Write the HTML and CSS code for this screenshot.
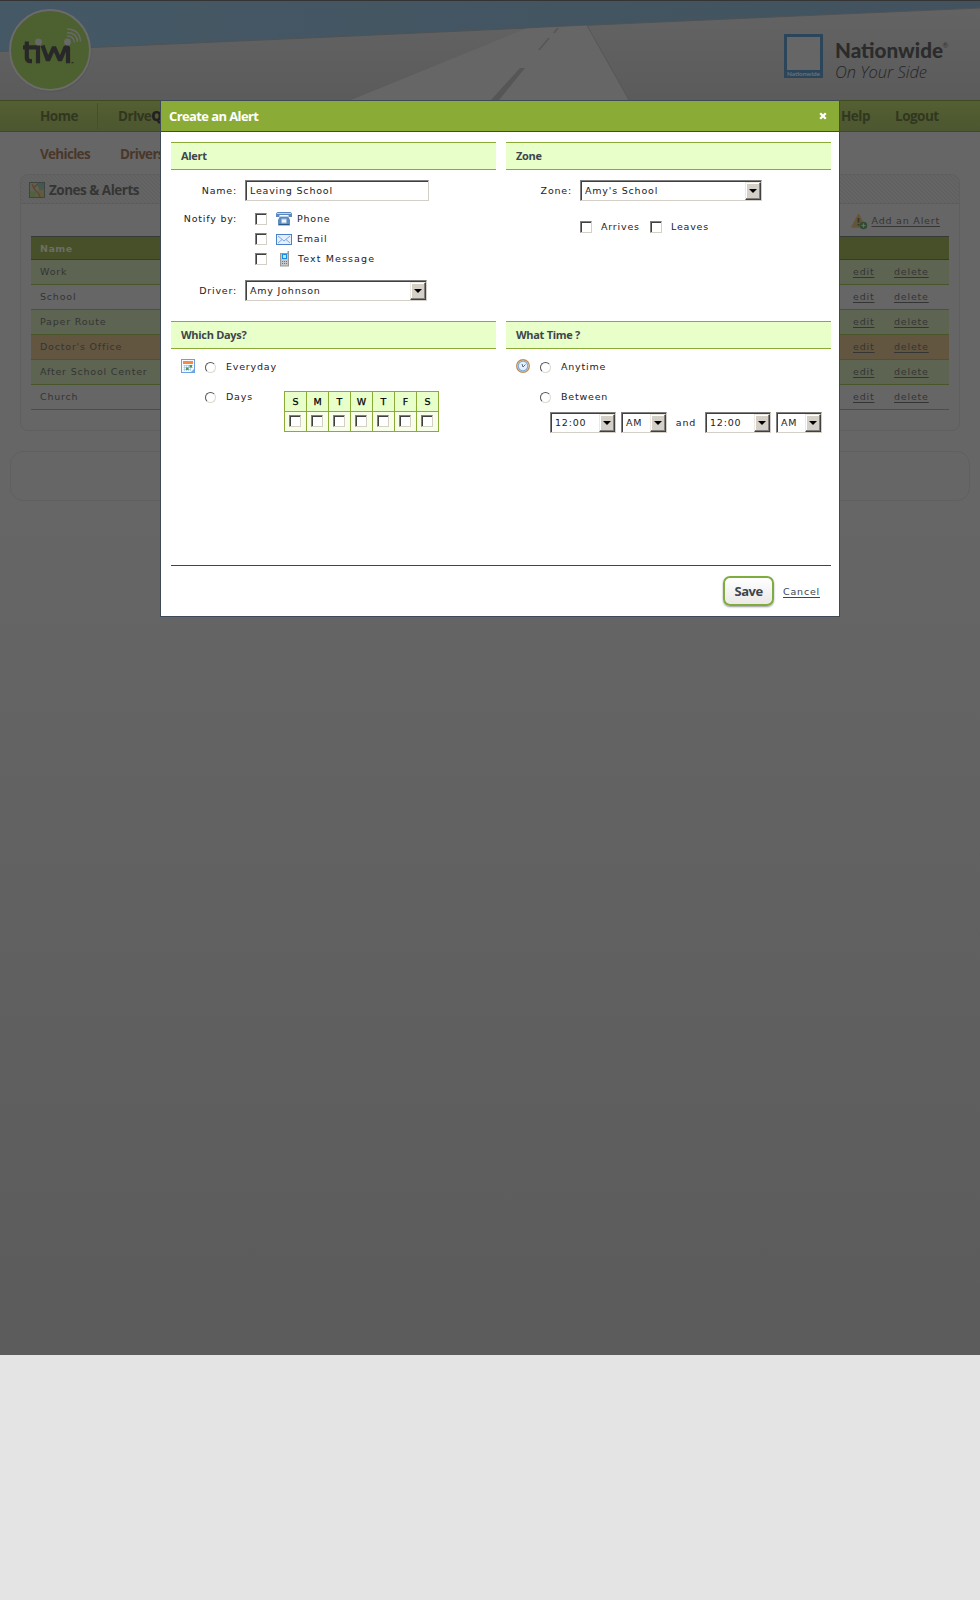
FILE: index.html
```
<!DOCTYPE html>
<html lang="en">
<head>
<meta charset="utf-8">
<title>Create an Alert</title>
<link rel="stylesheet" href="styles.css">
</head>
<body>
<div class="page">
  <header class="banner">
    <svg width="980" height="100" viewBox="0 0 980 100">
      <defs>
        <linearGradient id="sky" x1="0" y1="0" x2="1" y2="0"><stop offset="0" stop-color="#455865"/><stop offset="1" stop-color="#42535f"/></linearGradient>
        <linearGradient id="land" x1="0" y1="0" x2="0" y2="1"><stop offset="0" stop-color="#646464"/><stop offset="1" stop-color="#5b5b5b"/></linearGradient>
      </defs>
      <rect width="980" height="100" fill="url(#land)"/>
      <path d="M0 0H980V8L660 22L330 37L0 51.500Z" fill="url(#sky)"/>
      <path d="M0 51.500L330 37L660 22L980 8" fill="none" stroke="#505355"/>
      <path d="M351 100L526 28.500L587 25.500L629 100Z" fill="#666"/>
      <path d="M587 25.500L629 100" stroke="#575757" fill="none"/>
      <path d="M491 100L520 68H525L499 100ZM538 50L548 38H550L540 50ZM553 33L557 28H559L555 33Z" fill="#565656"/>
      <rect width="980" height="1" fill="#343434"/>
      <circle cx="50.500" cy="51" r="41" fill="#505050" opacity=".6"/>
      <circle cx="50" cy="50" r="40" fill="#4d602f" stroke="#6b6b6b" stroke-width="2"/>
      <g fill="none" stroke="#282828" stroke-width="4.200">
        <path d="M26.800 41.500V57.500Q26.800 61.200 30.500 61.200H32M23 47.300H40"/>
        <path d="M38 46V63.300"/>
        <path d="M42.500 45.500L48 60.500L54 47L60 60.500L65.500 47.300H68V63.300" stroke-linejoin="bevel"/>
      </g>
      <circle cx="38.500" cy="42" r="3.400" fill="#686868"/><circle cx="67.500" cy="42" r="3.400" fill="#686868"/>
      <path d="M67 36Q74 36 74.500 42.500M67 32.500Q77.500 33 77.500 42M67 29Q80 29.500 80.500 41.500" fill="none" stroke="#686868" stroke-width="1.400"/>
      <rect x="71.500" y="62" width="2" height="1.200" fill="#282828"/>
      <rect x="784" y="34" width="39" height="44" fill="#2b465a"/>
      <rect x="787" y="37" width="33" height="33" fill="#666"/>
      <text x="787" y="76" class="mark-small" textLength="33" lengthAdjust="spacingAndGlyphs">Nationwide</text>
      <text x="835" y="58" class="mark-name" textLength="108" lengthAdjust="spacingAndGlyphs">Nationwide</text>
      <text x="942.500" y="48" class="mark-reg">®</text>
      <text x="835" y="78" class="mark-line" textLength="92" lengthAdjust="spacingAndGlyphs">On Your Side</text>
    </svg>
  </header>
  <nav class="nav"><span class="home">Home</span><span class="driveq">DrIve<b>Q</b></span><span class="help">Help</span><span class="logout">Logout</span></nav>
  <nav class="subnav"><span>Vehicles</span><span>Drivers</span></nav>
  <section class="panel">
    <div class="panel-head">
      <svg width="16" height="16" viewBox="0 0 16 16"><rect width="16" height="16" fill="#3d4541"/><rect x="1" y="1" width="14" height="14" fill="#5c6150"/><path d="M8 1h7v7l-4 2z" fill="#44584f"/><path d="M1 9l6 1v5H1z" fill="#51603e"/><path d="M8 15V9l7-2v8z" fill="#5f5c3e"/><path d="M3 2l3 6 4 4 1 3M4 6l5-4" fill="none" stroke="#653f33" stroke-width="1.200"/></svg>
      <h2>Zones &amp; Alerts</h2>
    </div>
    <div class="add">
      <svg width="17" height="17" viewBox="0 0 17 17"><path d="M7.500 1.500L14 14H1Z" fill="#5d573e" stroke="#675636" stroke-width="1.600" stroke-linejoin="round"/><path d="M7.500 5v4.500M7.500 11v1.500" stroke="#3c3424" stroke-width="1.800"/><circle cx="12.500" cy="12.500" r="3.800" fill="#314c31"/><path d="M10.500 12.500h4M12.500 10.500v4" stroke="#667066" stroke-width="1.200"/></svg>
      <a>Add an Alert</a>
    </div>
    <div class="list">
      <div class="list-head">Name</div>
      <div class="item odd"><span>Work</span><a>edit</a><a>delete</a></div>
      <div class="item"><span>School</span><a>edit</a><a>delete</a></div>
      <div class="item odd"><span>Paper Route</span><a>edit</a><a>delete</a></div>
      <div class="item hot"><span>Doctor's Office</span><a>edit</a><a>delete</a></div>
      <div class="item odd"><span>After School Center</span><a>edit</a><a>delete</a></div>
      <div class="item"><span>Church</span><a>edit</a><a>delete</a></div>
    </div>
  </section>
  <div class="foot"></div>
</div>

<div class="modal">
  <div class="title"><h1>Create an Alert</h1><svg width="8" height="8" viewBox="0 0 8 8"><path d="M1.200 1.200L6.800 6.800M6.800 1.200L1.200 6.800" stroke="#fff" stroke-width="2.300"/></svg></div>
  <div class="body">
    <section class="alert">
      <h3>Alert</h3>
      <div class="form">
        <label>Name:</label><div class="field name">Leaving School</div>
        <label class="notify">Notify by:</label>
        <div class="ways">
          <div class="way"><i class="check"></i><svg width="16" height="14" viewBox="0 0 16 14"><path d="M0 1.500L1.500 0H14.500L16 1.500V5H12.500V3H3.500V5H0Z" fill="#5c88bd"/><path d="M1 1.500H15" stroke="#bfd5ee"/><path d="M3.500 5H12.500L14 8V13.500H2V8Z" fill="#5f8cc0"/><path d="M3 12.500H13" stroke="#29568c"/><path d="M5.500 7H10.500V11H5.500Z" fill="#f2f7ff" stroke="#9ab8da"/><path d="M3.500 4.500H12.500" stroke="#b7cfe9"/></svg><span>Phone</span></div>
          <div class="way"><i class="check"></i><svg width="16" height="11" viewBox="0 0 16 11"><rect x=".5" y=".5" width="15" height="10" fill="#e6f0fc" stroke="#4b80c8"/><path d="M2 2L8 7L14 2M2 9L6 5.500M14 9L10 5.500" fill="none" stroke="#7ca9e0"/></svg><span>Email</span></div>
          <div class="way"><i class="check"></i><svg width="16" height="16" viewBox="0 0 16 16"><path d="M11.500 0H13V15.500H4V2H11.500Z" fill="#999"/><rect x="5" y="3" width="7" height="11.500" fill="#c6c6c6"/><rect x="6.500" y="3.500" width="4" height="4" fill="#b9e6ff" stroke="#148ee5"/><path d="M6 10.500h1M8 10.500h1M10 10.500h1M6 12.500h1M8 12.500h1M10 12.500h1" stroke="#747474"/><path d="M6 10.500h1" stroke="#3ca34b"/><path d="M10 10.500h1" stroke="#d24a3c"/></svg><span class="sms">Text Message</span></div>
        </div>
        <label>Driver:</label><div class="field select">Amy Johnson<i class="drop"></i></div>
      </div>
    </section>
    <section>
      <h3>Zone</h3>
      <div class="form">
        <label>Zone:</label><div class="field select">Amy's School<i class="drop"></i></div>
        <div class="zones"><i class="check"></i><span class="arrives">Arrives</span><i class="check"></i><span>Leaves</span></div>
      </div>
    </section>
    <section>
      <h3>Which Days?</h3>
      <div class="opts">
        <svg width="14" height="14" viewBox="0 0 14 14"><rect x=".5" y=".5" width="13" height="13" fill="#f7fbff" stroke="#6aa0df"/><rect x="2" y="2" width="10" height="3" fill="#f38a45"/><path d="M2.500 6.500H12M2.500 8.500H12M2.500 10.500H10M3.500 6V12M5.500 6V12M7.500 6V12M9.500 6V12" stroke="#a9c6e6" stroke-width=".8"/><path d="M8.500 6h2.500v2.500H8.500zM5 8.500h2.500v2.500h-2.500z" fill="#4b9c45"/><path d="M10 13L13 10V13Z" fill="#78a9df"/></svg>
        <i class="radio"></i><span>Everyday</span>
      </div>
      <div class="opts second"><i class="radio"></i><span>Days</span>
        <div class="week"><b>S</b><b>M</b><b>T</b><b>W</b><b>T</b><b>F</b><b>S</b><u><i class="check"></i></u><u><i class="check"></i></u><u><i class="check"></i></u><u><i class="check"></i></u><u><i class="check"></i></u><u><i class="check"></i></u><u><i class="check"></i></u></div>
      </div>
    </section>
    <section>
      <h3 class="wide">What Time ?</h3>
      <div class="opts">
        <svg width="14" height="14" viewBox="0 0 14 14"><circle cx="7" cy="7" r="6.300" fill="#fff" stroke="#bd8f55" stroke-width="1.400"/><circle cx="7" cy="7" r="4.800" fill="#e2effc" stroke="#7ca7dc" stroke-width="1.200"/><path d="M6 5L7 8L9.500 5.500" stroke="#5e6c80" fill="none"/></svg>
        <i class="radio"></i><span>Anytime</span>
      </div>
      <div class="opts second"><i class="radio"></i><span>Between</span></div>
      <div class="times">
        <div class="field time">12:00<i class="drop"></i></div><div class="field half">AM<i class="drop"></i></div><span>and</span><div class="field time">12:00<i class="drop"></i></div><div class="field half">AM<i class="drop"></i></div>
      </div>
    </section>
  </div>
  <div class="actions"><button>Save</button><a>Cancel</a></div>
</div>
</body>
</html>
```
FILE: styles.css
```
* { box-sizing: border-box; }
body { margin: 0; background: #e4e4e4; height: 1600px; font: 9.500px/12px "DejaVu Sans", sans-serif; letter-spacing: .8px; color: #222; position: relative; overflow: hidden; }
svg { display: block; flex: none; }
i { font-style: normal; flex: none; }
h1, h2, h3 { margin: 0; font-family: "Open Sans", sans-serif; font-weight: 700; }
a { text-decoration: underline; text-underline-offset: 2px; }
.page { height: 1355px; background: linear-gradient(#666 0, #666 500px, #5c5c5c 1300px); }
.banner { height: 100px; }
.mark-small { font: 700 6px Lato, sans-serif; letter-spacing: 0; fill: #66737d; }
.mark-name { font: 900 20px Lato, sans-serif; letter-spacing: 0; fill: #2b2b2b; }
.mark-reg { font: 7px Lato, sans-serif; letter-spacing: 0; fill: #333; }
.mark-line { font: italic 300 16.500px "Open Sans", sans-serif; letter-spacing: 0; fill: #252525; }
.nav { height: 32px; border-top: 1px solid #3e4b22; border-bottom: 1px solid #3e4925; background: linear-gradient(#545f32, #4c5630); display: flex; align-items: center; font: 700 13.500px/20px "Open Sans", sans-serif; letter-spacing: -.5px; color: #31371f; }
.nav b { color: #1f2022; }
.home { width: 98px; padding-left: 40px; height: 26px; line-height: 26px; border-right: 1px solid #454f2a; }
.driveq { padding-left: 20px; letter-spacing: -.6px; }
.help { margin-left: auto; }
.logout { width: 110px; padding-left: 25px; }
.subnav { height: 42px; padding: 12px 0 0 40px; display: flex; font: 700 13.500px/20px "Open Sans", sans-serif; letter-spacing: -.7px; color: #4a372b; }
.subnav span { width: 80px; }
.panel { width: 940px; height: 257px; margin-left: 20px; border: 1px solid #5f5f5f; border-radius: 8px; overflow: hidden; }
.panel-head { height: 29px; border-bottom: 1px solid #5d5d5d; background: repeating-linear-gradient(45deg, #616161 0 1.400px, #656565 1.400px 2.828px); display: flex; align-items: center; padding: 2px 0 0 8px; gap: 4px; }
.panel-head h2 { font-size: 13.500px; line-height: 20px; letter-spacing: -.5px; color: #353535; }
.add { height: 32px; display: flex; justify-content: flex-end; align-items: center; gap: 4px; padding: 2px 19px 0 0; color: #353535; }
.list { width: 918px; margin-left: 10px; color: #343434; }
.list-head { height: 24px; border-top: 1px solid #353a37; border-bottom: 1px solid #353a37; background: #475029; color: #6c6e65; font-weight: 700; line-height: 24px; padding-left: 9px; letter-spacing: .5px; }
.item { height: 25px; border-bottom: 1px solid #48562a; display: flex; align-items: center; padding-left: 9px; }
.item span { width: 813px; }
.item a { width: 41px; }
.odd { background: #5d6452; }
.hot { background: #625640; }
.foot { margin: 20px 10px 0; height: 50px; border: 1px solid #606060; border-radius: 13px; }

.modal { position: absolute; left: 160px; top: 100px; width: 680px; height: 517px; background: #fff; border: 1px solid #3e4a56; display: flex; flex-direction: column; }
.title { height: 31px; flex: none; background: #8bab37; border-bottom: 1px solid #40484d; display: flex; align-items: center; justify-content: space-between; padding: 0 12px 0 8px; }
.title h1 { color: #fff; font-size: 13px; letter-spacing: -.6px; }
.title svg { margin-bottom: 1px; }
.body { margin: 10px 8px 0 10px; width: 660px; height: 423px; display: grid; grid-template-columns: 325px 325px; grid-template-rows: 179px 1fr; column-gap: 10px; }
h3 { height: 28px; background: #e9ffc9; border: solid #8bab37; border-width: 1px 0; padding-left: 10px; font-size: 11px; line-height: 26px; letter-spacing: -.3px; color: #3e454c; }
.form { padding-top: 10px; display: grid; grid-template-columns: 66px 1fr; column-gap: 8px; align-items: center; }
.form label { text-align: right; }
.field { height: 21px; border: 1px solid; border-color: #808080 #d4d0c8 #d4d0c8 #808080; box-shadow: inset 1px 1px #404040; background: #fff; padding-left: 4px; line-height: 20px; position: relative; }
.name { width: 184px; }
.select { width: 182px; }
.drop { position: absolute; right: 0; top: 1px; width: 16px; height: 18px; background: #d4d0c8; border: 1px solid; border-color: #ede9e1 #404040 #404040 #ede9e1; box-shadow: inset -1px -1px #808080, inset 1px 1px #fff; }
.drop::after { content: ""; position: absolute; left: 3px; top: 6px; border: 4px solid transparent; border-top-color: #000; border-bottom: 0; }
.notify { align-self: start; margin-top: 12px; }
.ways { height: 79px; padding: 8px 0 0 10px; }
.way { height: 20px; display: flex; align-items: center; gap: 5px; }
.way svg { margin-left: 4px; }
.way .sms { margin-left: 1px; letter-spacing: 1.100px; }
.check { width: 12px; height: 12px; display: block; border: 1px solid; border-color: #808080 #d4d0c8 #d4d0c8 #808080; box-shadow: inset 1px 1px #404040; background: #fff; }
.zones { grid-column: 2; display: flex; align-items: center; gap: 9px; padding-top: 20px; }
.arrives { width: 40px; }
.opts { display: flex; align-items: center; height: 30px; padding: 6px 0 0 10px; }
.opts svg { margin: -2px 0 0; }
.radio { width: 11px; height: 11px; margin: 0 10px; border-radius: 50%; border: 1.500px solid; border-color: #555 #ddd8d0 #ddd8d0 #555; background: #fff; }
.second .radio { margin-left: 24px; }
.second span { width: 58px; }
.week { align-self: flex-start; margin-top: 6px; display: grid; grid-template-columns: repeat(7, 22px); grid-template-rows: 20px 20px; border: solid #8bab37; border-width: 1px 0 0 1px; }
.week b, .week u { border: solid #8bab37; border-width: 0 1px 1px 0; background: #e9ffc9; color: #000; text-align: center; line-height: 19px; font-weight: 400; letter-spacing: 0; -webkit-text-stroke: .25px #000; text-decoration: none; }
.week u { background: #f7ffe9; padding: 3px 0 0 4px; }
.times { display: flex; align-items: center; padding: 3px 0 0 44px; }
.time { width: 66px; margin-right: 5px; }
.half { width: 46px; }
.times > span { width: 38px; text-align: center; }
.actions { margin: 0 8px 0 10px; width: 660px; border-top: 1px solid #3e454c; height: 51px; flex: none; display: flex; align-items: center; justify-content: flex-end; gap: 9px; padding-right: 11px; color: #3e454c; }
.actions a { padding-top: 2px; }
button { width: 51px; height: 30px; border: 2px solid #80ab3e; border-radius: 7px; background: linear-gradient(#fff, #ebe9e8); font: 700 13px "Open Sans", sans-serif; letter-spacing: -.5px; color: #3e454c; padding: 0; box-shadow: 0 1px 2px #999; }
```
